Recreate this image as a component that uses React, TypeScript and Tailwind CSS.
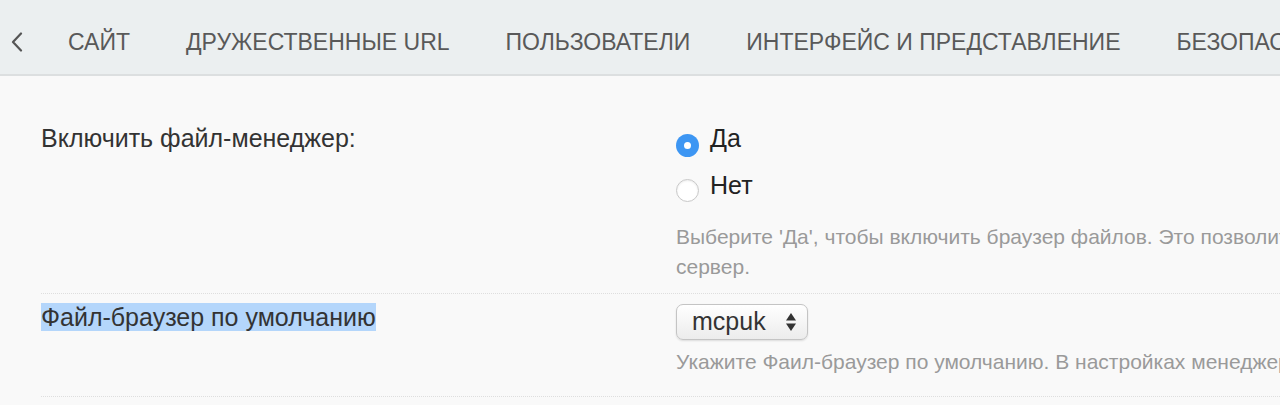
const tabs = ["Сайт", "Дружественные URL", "Пользователи", "Интерфейс и представление", "Безопасность"];

export default function App() {
  return (
    <div className="h-[405px] w-[1280px] overflow-hidden bg-[#f9f9f9] font-['Liberation_Sans',Arial,sans-serif]">
      {/* Tabs */}
      <div className="flex h-[76px] items-center border-b-2 border-[#dcdfe0] bg-[#ebeff0] pt-[10px]">
        <svg width="12" height="20" viewBox="0 0 12 20" className="ml-[11px] shrink-0 text-[#555]">
          <path d="M10 1.5 L2 10 L10 18.5" fill="none" stroke="currentColor" strokeWidth="2.2" strokeLinecap="round" strokeLinejoin="round" />
        </svg>
        <div className="ml-[45px] flex gap-[56px] whitespace-nowrap text-[23px] uppercase text-[#595959]">
          {tabs.map((t) => (
            <span key={t}>{t}</span>
          ))}
        </div>
      </div>

      <div className="pl-[41px]">
        {/* Row 1 */}
        <div className="flex pt-[47px] pb-[11px]">
          <div className="w-[635px] shrink-0 text-[25px] leading-[30px] text-[#333]">Включить файл-менеджер:</div>
          <div className="flex flex-col whitespace-nowrap">
            <label className="flex items-start gap-[11px] text-[25px] leading-[30px] text-[#222]">
              <span className="mt-[11px] flex h-[23px] w-[23px] items-center justify-center rounded-full bg-[#3d96f3]">
                <span className="h-[7px] w-[7px] rounded-full bg-white" />
              </span>
              Да
            </label>
            <label className="mt-[13px] flex items-start gap-[11px] text-[25px] leading-[30px] text-[#222]">
              <span className="mt-[9px] h-[23px] w-[23px] rounded-full border border-[#c8c8c8] bg-white shadow-[inset_0_1px_2px_rgba(0,0,0,0.08)]" />
              Нет
            </label>
            <p className="mt-[20px] text-[21px] leading-[30px] text-[#9a9a9a]">
              Выберите 'Да', чтобы включить браузер файлов. Это позволит загружать файлы на
              <br />
              сервер.
            </p>
          </div>
        </div>
        <div className="border-t border-dotted border-[#dedede]" />

        {/* Row 2 */}
        <div className="flex pt-[8px] pb-[19px]">
          <div className="w-[635px] shrink-0 text-[25px] leading-[30px] text-[#333]">
            <span className="bg-[#b4d6fb]">Файл-браузер по умолчанию</span>
          </div>
          <div className="flex flex-col whitespace-nowrap">
            <div className="mt-[2px] flex h-[36px] w-[132px] items-center justify-between rounded-[7px] border border-[#c4c4c4] bg-gradient-to-b from-white to-[#ececec] pl-[15px] pr-[10px] text-[25px] text-[#333] shadow-[0_1px_2px_rgba(0,0,0,0.12)]">
              <span>mcpuk</span>
              <svg width="12" height="20" viewBox="0 0 12 20" className="text-[#333]">
                <path d="M6 1 L11 8.5 H1 Z" fill="currentColor" />
                <path d="M6 19 L11 11.5 H1 Z" fill="currentColor" />
              </svg>
            </div>
            <p className="mt-[7px] text-[21px] leading-[30px] text-[#9a9a9a]">
              Укажите Фаил-браузер по умолчанию. В настройках менеджера файлов можно выбрать другой.
            </p>
          </div>
        </div>
        <div className="border-t border-dotted border-[#dedede]" />
      </div>
    </div>
  );
}
